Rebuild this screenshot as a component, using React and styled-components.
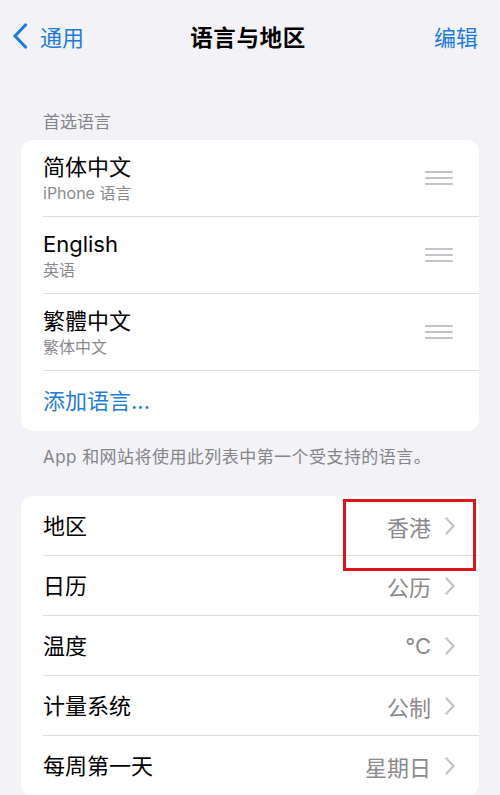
import React from 'react'
import styled, { createGlobalStyle } from 'styled-components'

const GlobalStyle = createGlobalStyle`
  html, body {
    margin: 0;
    padding: 0;
    background: #f2f2f7;
    overflow: hidden;
  }
  body {
    font-family: "Inter", "Noto Sans CJK SC", "Noto Sans", sans-serif;
    -webkit-font-smoothing: antialiased;
  }
`

const BLUE = '#1d7ddf'

const Page = styled.div`
  width: 500px;
  height: 795px;
  background: #f2f2f7;
  color: #000;
`

const NavBar = styled.div`
  height: 72px;
  display: grid;
  grid-template-columns: 1fr auto 1fr;
  align-items: center;
  padding: 0 22px 0 12px;
  box-sizing: border-box;
`

const BackButton = styled.div`
  display: flex;
  align-items: center;
  gap: 12px;
  color: ${BLUE};
  font-size: 22px;
`

const Title = styled.div`
  font-size: 22.5px;
  font-weight: 700;
  letter-spacing: 0.6px;
  transform: translateX(3px);
`

const EditButton = styled.div`
  justify-self: end;
  color: ${BLUE};
  font-size: 22px;
`

const SectionHeader = styled.div`
  padding: 36px 0 0 43px;
  height: 68px;
  box-sizing: border-box;
  font-size: 17px;
  color: #85858a;
`

const Card = styled.div`
  position: relative;
  margin: 0 21px;
  background: #fff;
  border-radius: 12px;
  overflow: visible;
`

const Row = styled.div`
  margin-left: 22px;
  padding-right: 24px;
  height: ${p => p.$h}px;
  display: flex;
  align-items: center;
  justify-content: space-between;
  border-bottom: ${p => (p.$last ? 'none' : '1px solid #dedee2')};
  box-sizing: border-box;
`

const LangText = styled.div`
  display: flex;
  flex-direction: column;
  gap: 2px;
`

const MainLabel = styled.div`
  font-size: 22px;
  line-height: 28px;
  color: ${p => (p.$blue ? BLUE : '#000')};
`

const SubLabel = styled.div`
  font-size: 16px;
  line-height: 20px;
  color: #8a8a8e;
`

const Handle = styled.div`
  width: 28px;
  display: flex;
  flex-direction: column;
  gap: 4.5px;
  margin-right: 2px;
  span {
    display: block;
    height: 1.6px;
    background: #c3c3c8;
    border-radius: 1px;
  }
`

const Footer = styled.div`
  padding: 12px 0 0 43px;
  height: 65px;
  box-sizing: border-box;
  font-size: 17px;
  letter-spacing: 0.45px;
  color: #85858a;
`

const Value = styled.div`
  display: flex;
  align-items: center;
  gap: 14px;
  font-size: 22px;
  color: #8a8a8e;
`

const Highlight = styled.div`
  position: absolute;
  top: 3px;
  left: 322px;
  width: 133px;
  height: 72px;
  border: 3px solid #e2121b;
  box-sizing: border-box;
`

const Chevron = ({ color = '#c4c4c8', w = 10, h = 18, sw = 2.2 }) => (
  <svg width={w} height={h} viewBox="0 0 10 18" fill="none">
    <path d="M1.5 1.5 L8.5 9 L1.5 16.5" stroke={color} strokeWidth={sw} strokeLinecap="round" strokeLinejoin="round" />
  </svg>
)

const BackChevron = () => (
  <svg width="16" height="26" viewBox="0 0 16 26" fill="none">
    <path d="M13.5 2 L3 13 L13.5 24" stroke={BLUE} strokeWidth="3.2" strokeLinecap="round" strokeLinejoin="round" />
  </svg>
)

const languages = [
  { name: '简体中文', sub: 'iPhone 语言' },
  { name: 'English', sub: '英语' },
  { name: '繁體中文', sub: '繁体中文' },
]

const settings = [
  { label: '地区', value: '香港' },
  { label: '日历', value: '公历' },
  { label: '温度', value: '°C' },
  { label: '计量系统', value: '公制' },
  { label: '每周第一天', value: '星期日' },
]

export default function App() {
  return (
    <Page>
      <GlobalStyle />
      <NavBar>
        <BackButton>
          <BackChevron />
          <span>通用</span>
        </BackButton>
        <Title>语言与地区</Title>
        <EditButton>编辑</EditButton>
      </NavBar>

      <SectionHeader>首选语言</SectionHeader>
      <Card>
        {languages.map((lang, index) => (
          <Row key={index} $h={77}>
            <LangText>
              <MainLabel>{lang.name}</MainLabel>
              <SubLabel>{lang.sub}</SubLabel>
            </LangText>
            <Handle>
              <span />
              <span />
              <span />
            </Handle>
          </Row>
        ))}
        <Row $h={60} $last>
          <MainLabel $blue>添加语言...</MainLabel>
        </Row>
      </Card>
      <Footer>App 和网站将使用此列表中第一个受支持的语言。</Footer>

      <Card>
        {settings.map((item, index) => (
          <Row key={index} $h={60} $last={index === settings.length - 1}>
            <MainLabel>{item.label}</MainLabel>
            <Value>
              <span>{item.value}</span>
              <Chevron />
            </Value>
          </Row>
        ))}
        <Highlight />
      </Card>
    </Page>
  )
}
